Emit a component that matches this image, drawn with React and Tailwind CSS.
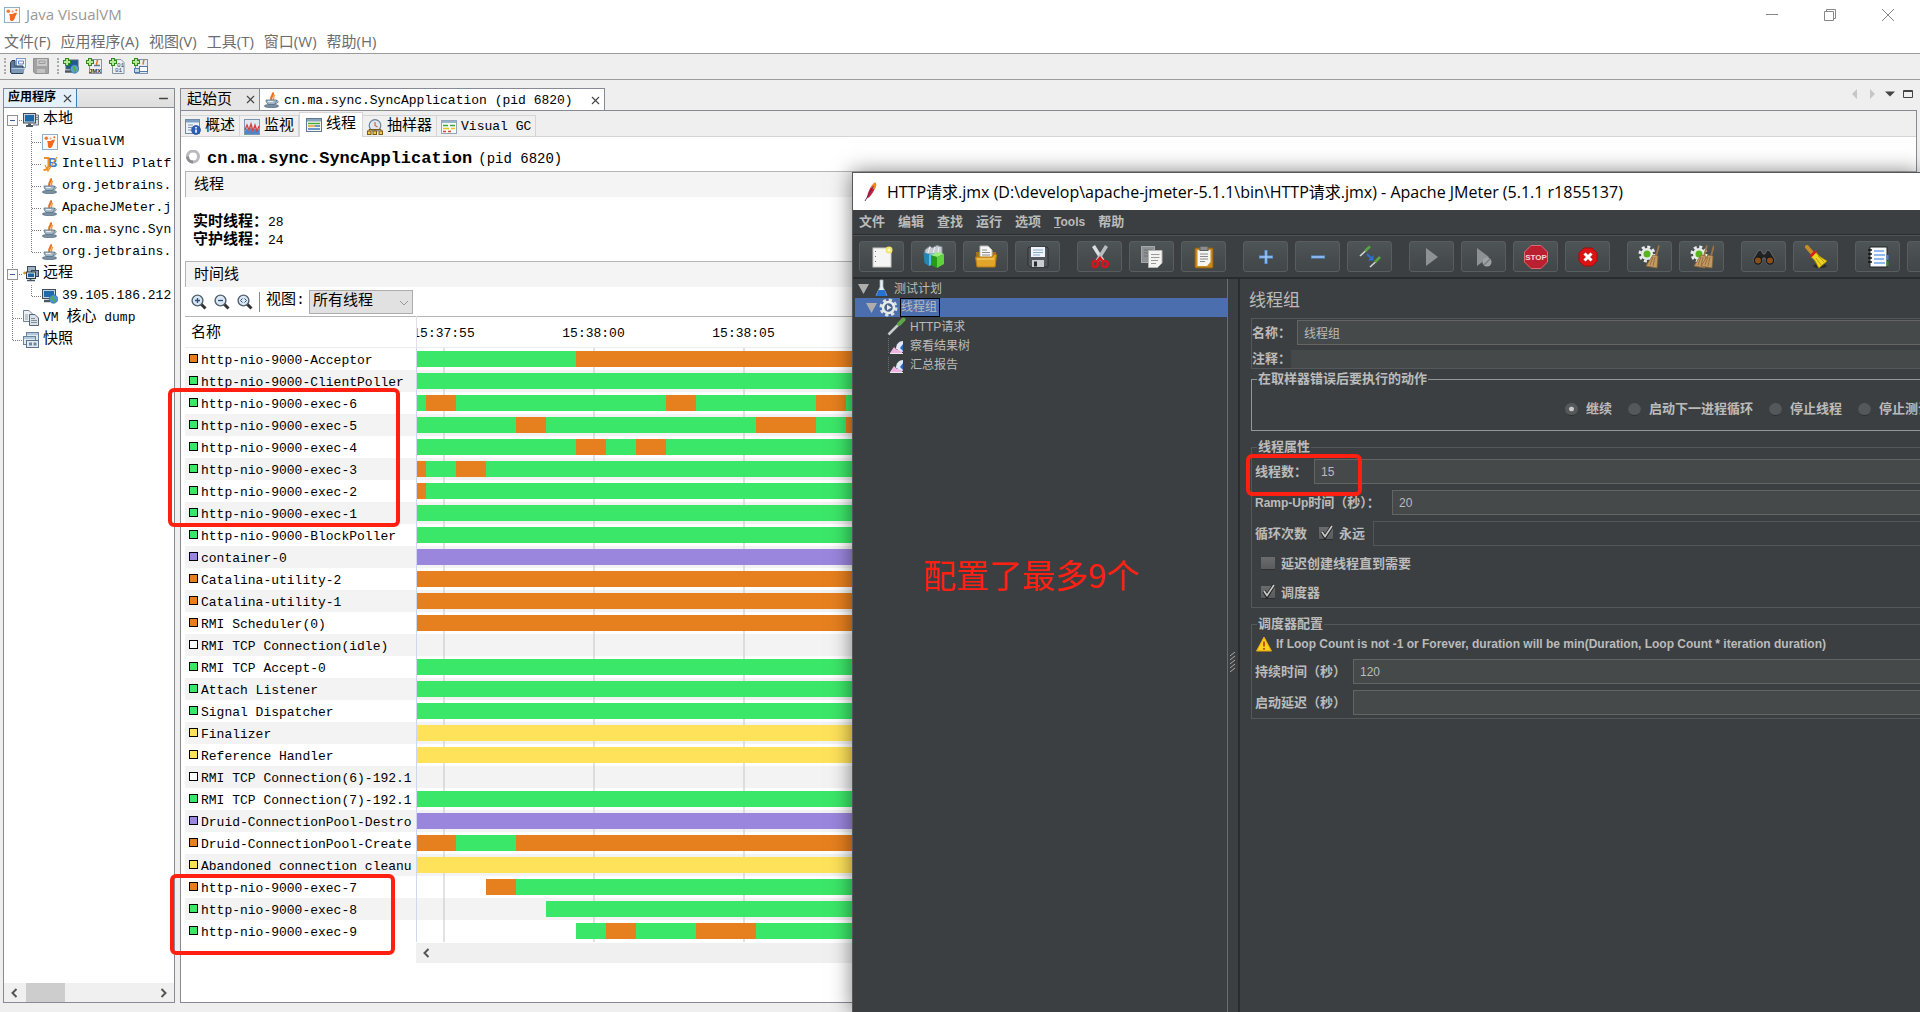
import { Minus, X } from 'lucide-react';

const G = '#3be768';
const O = '#e6801e';
const P = '#9a86dd';
const Y = '#fee25a';

// [colour, start] pairs, the last one runs to the right edge
const threads = [
  { name: 'http-nio-9000-Acceptor', state: O, runs: [[G, 0], [O, 159]] },
  { name: 'http-nio-9000-ClientPoller', state: G, runs: [[G, 0]] },
  { name: 'http-nio-9000-exec-6', state: G, runs: [[G, 0], [O, 9], [G, 39], [O, 249], [G, 279], [O, 399], [G, 429]] },
  { name: 'http-nio-9000-exec-5', state: G, runs: [[G, 0], [O, 99], [G, 129], [O, 339], [G, 399], [O, 429]] },
  { name: 'http-nio-9000-exec-4', state: G, runs: [[G, 0], [O, 159], [G, 189], [O, 219], [G, 249]] },
  { name: 'http-nio-9000-exec-3', state: G, runs: [[O, 0], [G, 9], [O, 39], [G, 69]] },
  { name: 'http-nio-9000-exec-2', state: G, runs: [[O, 0], [G, 9]] },
  { name: 'http-nio-9000-exec-1', state: G, runs: [[G, 0]] },
  { name: 'http-nio-9000-BlockPoller', state: G, runs: [[G, 0]] },
  { name: 'container-0', state: P, runs: [[P, 0]] },
  { name: 'Catalina-utility-2', state: O, runs: [[O, 0]] },
  { name: 'Catalina-utility-1', state: O, runs: [[O, 0]] },
  { name: 'RMI Scheduler(0)', state: O, runs: [[O, 0]] },
  { name: 'RMI TCP Connection(idle)', state: '#ffffff', runs: [] },
  { name: 'RMI TCP Accept-0', state: G, runs: [[G, 0]] },
  { name: 'Attach Listener', state: G, runs: [[G, 0]] },
  { name: 'Signal Dispatcher', state: G, runs: [[G, 0]] },
  { name: 'Finalizer', state: Y, runs: [[Y, 0]] },
  { name: 'Reference Handler', state: Y, runs: [[Y, 0]] },
  { name: 'RMI TCP Connection(6)-192.1', state: '#ffffff', runs: [] },
  { name: 'RMI TCP Connection(7)-192.1', state: G, runs: [[G, 0]] },
  { name: 'Druid-ConnectionPool-Destro', state: P, runs: [[P, 0]] },
  { name: 'Druid-ConnectionPool-Create', state: O, runs: [[O, 0], [G, 39], [O, 99]] },
  { name: 'Abandoned connection cleanu', state: Y, runs: [[Y, 0]] },
  { name: 'http-nio-9000-exec-7', state: O, runs: [['transparent', 0], [O, 69], [G, 99]] },
  { name: 'http-nio-9000-exec-8', state: G, runs: [['transparent', 0], [G, 129]] },
  { name: 'http-nio-9000-exec-9', state: G, runs: [['transparent', 0], [G, 159], [O, 189], [G, 219], [O, 279], [G, 339]] },
];

function Svg({ size = 16, box = 16, children }) {
  return (
    <svg width={size} height={size} viewBox={`0 0 ${box} ${box}`} fill="none" className="shrink-0" aria-hidden="true">
      {children}
    </svg>
  );
}

/* VisualVM icons */

const VisualVmIcon = () => (
  <Svg>
    <rect x="0.5" y="0.5" width="15" height="15" fill="#fbfbfb" stroke="#8fb0c8" />
    <path d="M5 7.5 C7 6 8.5 8 10 6 L13 5.5 L12 8.5 C10.5 9.5 11.5 11 10 12.5 C9 14.5 6.5 14.5 6 12.5 C5.5 11 6.5 9 5 7.5 Z" fill="#f26a1b" />
    <circle cx="4.3" cy="4.3" r="1.8" fill="#f47a30" />
    <circle cx="8.6" cy="4.6" r="1" fill="#f79a60" />
    <circle cx="12.3" cy="3.2" r="1" fill="#f26a1b" />
  </Svg>
);

const JavaIcon = () => (
  <Svg>
    <path d="M8.5 0.5 C10.5 3 6 4 7.5 8" stroke="#e8731c" strokeWidth="2.2" />
    <path d="M11 3 C8.5 5 10.5 6 9.2 8" stroke="#f09a4a" strokeWidth="1.4" />
    <path d="M2 8 H12.5 C12.5 11.5 10.5 13 7.5 13 C4 13 2 11 2 8 Z" fill="#a9bccb" stroke="#566f84" strokeWidth="0.8" />
    <path d="M12 8.8 C15 8.2 15 11.2 11.3 11.4" stroke="#566f84" />
    <ellipse cx="7.5" cy="14" rx="7.2" ry="1.7" fill="#7990a4" stroke="#4a6277" strokeWidth="0.6" />
    <path d="M4 9.5 H9" stroke="#e7eef4" />
  </Svg>
);

const IdeIcon = () => (
  <Svg>
    <text x="6" y="11" fontSize="13" fontWeight="bold" fontFamily="Liberation Sans" fill="#3c76d2">B</text>
    <path d="M2 2 H6.5 V9 C6.5 12 5 14 1.5 14" stroke="#f09020" strokeWidth="2" />
    <path d="M3 9 L6 15 L15 1" stroke="#f09020" strokeWidth="1.2" />
  </Svg>
);

const LocalIcon = () => (
  <Svg>
    <path d="M12.5 3 H15.5 V13 H10" fill="#d7dade" stroke="#6e7780" />
    <rect x="0.5" y="1.5" width="12" height="9.5" fill="#c9d0d6" stroke="#3f4d59" />
    <rect x="2" y="3" width="9" height="6.5" fill="#1d68a8" />
    <path d="M3 14 H10 M5 12.5 H8" stroke="#4c5862" strokeWidth="2" />
    <path d="M13 5.5 H15 M13 7.5 H15" stroke="#7c868f" />
  </Svg>
);

const RemoteIcon = () => (
  <Svg>
    <rect x="4.5" y="0.5" width="8" height="6" fill="#9fb0be" stroke="#3a4a59" />
    <rect x="8.5" y="4.5" width="7" height="6" fill="#8ba2b5" stroke="#3a4a59" />
    <rect x="3.5" y="6" width="9" height="6.5" fill="#dbe0e4" stroke="#2f3c48" />
    <rect x="5" y="7.5" width="6" height="3.5" fill="#1e5f9e" />
    <path d="M4 14.5 H12 M7.5 13 V14" stroke="#485663" strokeWidth="1.6" />
    <path d="M2 7 H4" stroke="#555" />
    <circle cx="1.6" cy="7" r="1.4" fill="#d89528" />
  </Svg>
);

const HostIcon = () => (
  <Svg>
    <rect x="0.5" y="1.5" width="13" height="9" fill="#c9d0d6" stroke="#3f4d59" />
    <rect x="2" y="3" width="10" height="6" fill="#1c6aa9" />
    <path d="M2 13 H8" stroke="#4c5862" strokeWidth="2.5" />
    <circle cx="11.5" cy="11" r="4.3" fill="#4b92d8" stroke="#2b5f94" strokeWidth="0.6" />
    <path d="M9 8.5 L12 8 L12 11 L14 12 L12.5 14.5 L11 12.5 L8.5 11.5 Z" fill="#4fae48" />
  </Svg>
);

const DumpIcon = () => (
  <Svg>
    <path d="M0.5 0.5 H6 L9.5 4 V11.5 H0.5 Z" fill="#edf0f2" stroke="#738391" />
    <path d="M2 5 H5 M2 7 H5 M2 9 H5" stroke="#91a0ad" />
    <path d="M6.5 4.5 H12 L15.5 8 V15.5 H6.5 Z" fill="#dbe1e6" stroke="#54677a" />
    <path d="M8 8.5 H12 M8 10.5 H14 M8 12.5 H14" stroke="#7f8f9d" />
  </Svg>
);

const SnapshotIcon = () => (
  <Svg>
    <rect x="3.5" y="0.5" width="12" height="8" fill="#e3eaf0" stroke="#6b839a" />
    <rect x="0.5" y="4.5" width="12" height="8" fill="#e3eaf0" stroke="#6b839a" />
    <path d="M1 6 H12 M4 2 H15" stroke="#7fa5cf" />
    <rect x="3.5" y="8.5" width="12" height="7" fill="#e3eaf0" stroke="#5a728a" />
    <rect x="6" y="10.5" width="3" height="3" fill="#6d87a3" />
    <rect x="10.5" y="10.5" width="3" height="3" fill="#6d87a3" />
  </Svg>
);

const OpenIcon = () => (
  <Svg>
    <rect x="6.5" y="0.5" width="9" height="9" fill="#f2f6fb" stroke="#7b9bd0" />
    <path d="M8.5 3 H13.5 V6 H8.5 Z" stroke="#5f86c6" />
    <path d="M0.5 4.5 L2 2.5 H5 V8 H13 V15.5 H1.5 L0.5 14 Z" fill="#5c7898" stroke="#2c4058" />
    <path d="M1 10.5 H15 L13 15 H2 Z" fill="#7f9ab8" />
    <path d="M1.5 10.5 H14" stroke="#b4c6da" />
  </Svg>
);

const SaveDisabledIcon = () => (
  <Svg>
    <path d="M0.5 0.5 H15.5 V15.5 H2 L0.5 14 Z" fill="#a2a2a2" stroke="#929292" />
    <rect x="4" y="1" width="10" height="7" fill="#cbcbcb" />
    <path d="M6 3 H12 V5.500 H6 Z" stroke="#9b9b9b" />
    <rect x="4" y="11" width="8" height="4" fill="#c2c2c2" />
  </Svg>
);

const PlusMark = () => (
  <>
    <path d="M4 0 V8 M0 4 H8" stroke="#2f8a1b" strokeWidth="4" />
    <path d="M4 1 V7 M1 4 H7" stroke="#b4e89a" strokeWidth="2" />
  </>
);

const AddHostIcon = () => (
  <Svg>
    <rect x="3" y="2" width="12" height="9" fill="#1c5c92" stroke="#55636f" />
    <path d="M2 13.5 H9" stroke="#4c5862" strokeWidth="2.5" />
    <circle cx="11.5" cy="11" r="4.2" fill="#5c9ede" stroke="#2b5f94" strokeWidth="0.6" />
    <path d="M9 9 L12 8 L12 11 L14 12 L12 14.5 Z" fill="#4fae48" />
    <PlusMark />
  </Svg>
);

const AddJmxIcon = () => (
  <Svg>
    <rect x="3.5" y="1.5" width="12" height="14" fill="#eceff1" stroke="#8494a1" />
    <path d="M11 1.5 C13 4 9 4.5 11 7" stroke="#e8731c" strokeWidth="1.5" />
    <path d="M8 7.5 H14" stroke="#65798a" strokeWidth="1.5" />
    <text x="3" y="15" fontSize="6" fontWeight="bold" fontFamily="Liberation Sans" fill="#333">JMX</text>
    <PlusMark />
  </Svg>
);

const AddDumpIcon = () => (
  <Svg>
    <path d="M3.500 1.500 H12 L15 4.500 V15.500 H3.500 Z" fill="#eceff1" stroke="#8494a1" />
    <text x="8" y="8.5" fontSize="6" fontFamily="Liberation Mono" fill="#34495c">01</text>
    <text x="6" y="14" fontSize="6" fontFamily="Liberation Mono" fill="#34495c">01</text>
    <PlusMark />
  </Svg>
);

const AddSnapshotIcon = () => (
  <Svg>
    <rect x="3.5" y="1.5" width="12" height="14" fill="#e6ecf2" stroke="#7d94aa" />
    <path d="M11.5 1.5 C13 3.5 10 4 11.5 6.5" stroke="#e8731c" strokeWidth="1.5" />
    <rect x="7.5" y="8.5" width="8" height="5" fill="#fff" stroke="#4e79ad" />
    <rect x="2.5" y="10.5" width="5" height="4" fill="#c4d4e6" stroke="#4e79ad" />
    <PlusMark />
  </Svg>
);

const OverviewIcon = () => (
  <Svg>
    <rect x="0.5" y="0.5" width="14" height="14" fill="#eef2f6" stroke="#6f8ba5" />
    <rect x="1" y="1" width="13" height="2.5" fill="#7fa0c2" />
    <path d="M3 6 H8 M3 8.5 H7 M3 11 H6" stroke="#8195a8" />
    <circle cx="11" cy="11" r="4.5" fill="#2c5fb8" stroke="#1d3f86" strokeWidth="0.6" />
    <path d="M11 8 V9.4 M11 10.4 V13.8" stroke="#fff" strokeWidth="1.6" />
  </Svg>
);

const MonitorIcon = () => (
  <Svg>
    <rect x="0.5" y="0.5" width="15" height="15" fill="#dfe9f3" stroke="#7b95ad" />
    <path d="M1 12 L3 9 L5 12 L7 8 L9 13 L11 9 L13 12 L15 10 V15 H1 Z" fill="#4d86c9" />
    <path d="M1 11 L3 6 L5 11 L7 5 L9 12 L11 6 L13 12 L15 7" stroke="#d6413b" strokeWidth="1.3" />
  </Svg>
);

const ThreadsIcon = () => (
  <Svg>
    <rect x="0.5" y="1.5" width="15" height="13" fill="#f3f6e8" stroke="#607a92" />
    <rect x="1" y="2" width="14" height="2.5" fill="#8aa4bd" />
    <path d="M2 6.5 H14" stroke="#45a83a" strokeWidth="1.4" />
    <path d="M2 9 H9" stroke="#d99a1c" strokeWidth="1.4" />
    <path d="M9 9 H14 M2 12 H14" stroke="#3f7ac0" strokeWidth="1.4" />
  </Svg>
);

const SamplerIcon = () => (
  <Svg>
    <circle cx="8" cy="6.5" r="5.8" fill="#dfe8f1" stroke="#6b8094" strokeWidth="1.2" />
    <path d="M8 3 V6.5 L10.5 8" stroke="#d9652a" strokeWidth="1.2" />
    <path d="M2 12 V10.5 H14 V12 M8 10 V12" stroke="#7a5b14" />
    <rect x="0.5" y="12" width="3.5" height="3.5" fill="#f3c648" stroke="#7a5b14" />
    <rect x="6" y="12" width="3.5" height="3.5" fill="#f3c648" stroke="#7a5b14" />
    <rect x="12" y="12" width="3.5" height="3.5" fill="#f3c648" stroke="#7a5b14" />
  </Svg>
);

const GcIcon = () => (
  <Svg>
    <rect x="0.5" y="1.5" width="15" height="13" fill="#fbfcfd" stroke="#8fa5ba" />
    <rect x="1" y="2" width="14" height="2" fill="#9db3c8" />
    <path d="M2 6.5 H7 M9 6.5 H14" stroke="#3da935" strokeWidth="1.6" />
    <path d="M2 9.5 H8 M10 9.5 H14" stroke="#e8c022" strokeWidth="1.4" />
    <path d="M2 12.5 H5 M7 12.5 H10" stroke="#d84436" strokeWidth="1.4" />
  </Svg>
);

const Magnifier = ({ children }) => (
  <Svg>
    <path d="M10 10 L14.5 14.5" stroke="#333" strokeWidth="3" />
    <circle cx="6.5" cy="6.5" r="5.4" fill="#dbe8f4" stroke="#51606e" strokeWidth="1.4" />
    {children}
  </Svg>
);

/* JMeter icons, 24 unit box */

const NewIcon = () => (
  <Svg size={24} box={24}>
    <rect x="3" y="3" width="18" height="19" fill="#f5f5f3" stroke="#c5c5c0" />
    <path d="M5.5 6 V19" stroke="#777" strokeDasharray="1 4" />
    <circle cx="19" cy="5" r="3.5" fill="#f3e36a" />
    <circle cx="19" cy="5" r="1.6" fill="#fffbd0" />
  </Svg>
);

const TemplatesIcon = () => (
  <Svg size={24} box={24}>
    <path d="M3 5 L8 1 L10 3 L15 0.5 L20 2 V9 H3 Z" fill="#c5cbd0" stroke="#87929a" />
    <path d="M8 2 L6 8 M13 2 L11 8 M17 2 L16 8" stroke="#f0f2f3" />
    <path d="M1.5 7 L7 9.5 V21 L2.5 18 Z" fill="#2585b5" />
    <path d="M7 9.5 L12 8 V19 L7 21 Z" fill="#56c0e6" />
    <path d="M9 10 L15 12 V23 L9 20 Z" fill="#279a1c" />
    <path d="M15 12 L22 9 V19 L15 23 Z" fill="#5fd33c" />
    <path d="M9 10 L16 7 L22 9 L15 12 Z" fill="#9cec7c" />
  </Svg>
);

const FolderIcon = () => (
  <Svg size={24} box={24}>
    <path d="M2 7 H22 V21 H3 Z" fill="#a87412" />
    <path d="M6 1 H14 L18 5 V14 H6 Z" fill="#f7f7f7" stroke="#b9b9b9" />
    <path d="M8 5 H13 M8 7.5 H16 M8 10 H16" stroke="#8c8c8c" />
    <path d="M1.5 12 H18 L20 9.5 H22.5 L21 22 H3 Z" fill="#e0a52a" stroke="#b27b12" />
    <path d="M3 14 H20" stroke="#f8d576" />
  </Svg>
);

const FloppyIcon = () => (
  <Svg size={24} box={24}>
    <path d="M3 2 H21 L22 3 V22 H4 L2 20 V3 Z" fill="#52565b" stroke="#2c2f32" />
    <rect x="5" y="2" width="14" height="10" fill="#eef4fa" />
    <path d="M7 5 H17 M7 7.5 H17 M7 10 H14" stroke="#8ba9c9" />
    <rect x="6" y="15" width="12" height="7" fill="#c9ccd0" />
    <rect x="8" y="16.5" width="3" height="5" fill="#2a2c2e" />
  </Svg>
);

const CutIcon = () => (
  <Svg size={24} box={24}>
    <path d="M5.5 1 L15 16" stroke="#dcdfe1" strokeWidth="3.5" />
    <path d="M18.5 1 L9 16" stroke="#b9bdc0" strokeWidth="3.5" />
    <ellipse cx="7" cy="19" rx="2.8" ry="3" stroke="#d5151b" strokeWidth="2.6" />
    <ellipse cx="17" cy="19" rx="2.8" ry="3" stroke="#d5151b" strokeWidth="2.6" />
    <path d="M9 16.5 L12 13 L15 16.5" stroke="#d5151b" strokeWidth="2.6" />
  </Svg>
);

const CopyIcon = () => (
  <Svg size={24} box={24}>
    <rect x="1.5" y="1.5" width="13" height="16" fill="#8e9193" stroke="#a5a8aa" />
    <path d="M4 5 H12 M4 8 H12 M4 11 H8" stroke="#6c6f71" />
    <path d="M8.5 5.5 H22 V18 L17.5 22.5 H8.5 Z" fill="#f3f3f1" stroke="#b6b6b2" />
    <path d="M11 9.5 H19.5 M11 12.5 H19.5 M11 15.5 H18 M11 18.5 H16" stroke="#999" />
  </Svg>
);

const PasteIcon = () => (
  <Svg size={24} box={24}>
    <rect x="3" y="3" width="18" height="20" rx="1" fill="#c98a23" stroke="#8c5b0e" />
    <path d="M5.5 5 H18.5 V17 L15 21 H5.5 Z" fill="#f5f5f2" />
    <rect x="8" y="1.5" width="8" height="4" fill="#8b8e91" stroke="#5d6063" />
    <path d="M8 9 H16 M8 11.5 H16 M8 14 H16 M8 16.5 H13" stroke="#8a8a8a" />
  </Svg>
);

const PlusIcon = () => (
  <Svg size={24} box={24}>
    <path d="M12 5 V19 M5 12 H19" stroke="#5b97de" strokeWidth="3" />
    <path d="M12 6 V18 M6 12 H18" stroke="#b7d5f5" />
  </Svg>
);

const MinusIcon = () => (
  <Svg size={24} box={24}>
    <path d="M5 12 H19" stroke="#5b97de" strokeWidth="3" />
    <path d="M6 12 H18" stroke="#b7d5f5" />
  </Svg>
);

const ToggleIcon = () => (
  <Svg size={24} box={24}>
    <path d="M2 11 L8 5.5" stroke="#d3d6d8" strokeWidth="1.6" />
    <path d="M7 6 L12 1.5" stroke="#58a445" strokeWidth="2.6" />
    <path d="M12 22 L18 16.5" stroke="#d3d6d8" strokeWidth="1.6" />
    <path d="M17 17 L22 12" stroke="#58a445" strokeWidth="2.6" />
    <path d="M9 9 L13 13" stroke="#2e71d0" strokeWidth="1.8" />
    <path d="M15.5 10 V15.5 H10 Z" fill="#2e71d0" />
  </Svg>
);

const PlayIcon = () => (
  <Svg size={24} box={24}><path d="M6 3 L18 12 L6 21 Z" fill="#8f9294" /></Svg>
);

const PlayNoTimersIcon = () => (
  <Svg size={24} box={24}>
    <path d="M5 3 L17 12 L5 21 Z" fill="#8f9294" />
    <circle cx="15" cy="17" r="4.5" fill="#9fa2a4" />
    <path d="M12 20 L18 14" stroke="#787b7d" strokeWidth="1.5" />
  </Svg>
);

const StopIcon = () => (
  <Svg size={24} box={24}>
    <path d="M7 0.5 H17 L23.5 7 V17 L17 23.5 H7 L0.5 17 V7 Z" fill="#bb2030" stroke="#dc6974" />
    <text x="12" y="15" textAnchor="middle" fontSize="8" fontWeight="bold" fontFamily="Liberation Sans" fill="#f4d5d8">STOP</text>
  </Svg>
);

const ShutdownIcon = () => (
  <Svg size={24} box={24}>
    <path d="M8 3 H16 L21 8 V16 L16 21 H8 L3 16 V8 Z" fill="#da1414" stroke="#a90808" />
    <path d="M8.5 8.5 L15.5 15.5 M15.5 8.5 L8.5 15.5" stroke="#fff" strokeWidth="3" />
  </Svg>
);

const Broom = ({ x }) => (
  <g transform={`translate(${x} 0)`}>
    <path d="M20 0.5 L17 11" stroke="#9a7443" strokeWidth="1.8" />
    <path d="M14 10 L19 11 L18 23 L7 21 Z" fill="#c29a63" stroke="#8b6636" strokeWidth="0.8" />
    <path d="M14 12 L11 20 M16 12 L14 21" stroke="#8b6636" strokeWidth="0.8" />
  </g>
);

const ClearIcon = ({ double }) => (
  <Svg size={24} box={24}>
    <circle cx="9" cy="9" r="6" fill="#e8ebea" />
    <circle cx="9" cy="9" r="7" stroke="#e8ebea" strokeWidth="3" strokeDasharray="3 2.5" />
    <circle cx="9" cy="9" r="3.5" fill="#58b41f" />
    {double && <Broom x={-3} />}
    <Broom x={double ? 4 : 1} />
  </Svg>
);

const BinocularsIcon = () => (
  <Svg size={24} box={24}>
    <path d="M6 6 L9 5 L11 9 H13 L15 5 L18 6 L23 15 L20 19 H15 L13 13 H11 L9 19 H4 L1 15 Z" fill="#202224" stroke="#636669" />
    <circle cx="6" cy="15.5" r="3.6" fill="#8a4f1d" stroke="#17191a" strokeWidth="1.2" />
    <circle cx="18" cy="15.5" r="3.6" fill="#8a4f1d" stroke="#17191a" strokeWidth="1.2" />
  </Svg>
);

const SweepIcon = () => (
  <Svg size={24} box={24}>
    <ellipse cx="16" cy="21" rx="7" ry="2" fill="#2b2d2e" />
    <path d="M3 2 L9 9" stroke="#c88b25" strokeWidth="4" strokeLinecap="round" />
    <path d="M7 12 L12 7 C14 11 18 13 23 16 L15 23 C13 21 12 15 7 12 Z" fill="#eed51f" stroke="#a98d0b" />
    <path d="M6.5 11.5 L12 6" stroke="#d3201c" strokeWidth="2.6" />
    <path d="M12 13 L17 20 M14 11 L20 17" stroke="#b89c10" />
  </Svg>
);

const FunctionIcon = () => (
  <Svg size={24} box={24}>
    <rect x="4" y="2" width="17" height="20" fill="#f7f9fc" stroke="#222" />
    <path d="M2 5 H6 M2 9 H6 M2 13 H6 M2 17 H6" stroke="#111" strokeWidth="1.5" />
    <path d="M8 6 H18 M8 10 H19 M8 14 H18 M8 18 H19" stroke="#2e7be0" strokeWidth="1.2" />
    <path d="M21.5 10 V15" stroke="#3c86e0" strokeWidth="2" />
    <path d="M21.5 16 V21" stroke="#2c8c2a" strokeWidth="2" />
  </Svg>
);

const FeatherIcon = () => (
  <Svg size={20} box={20}>
    <path d="M14 0.5 C16.500 2 13.500 9 8.500 15 L6 16.500 C6.500 10 10 3 14 0.5 Z" fill="#c92337" />
    <path d="M14 0.5 C16.500 2 15 5 13.500 7.500 L10 5.500 C11 3 12.500 1.500 14 0.5 Z" fill="#ee8a21" />
    <path d="M12.5 4 L4 19" stroke="#5e1d5c" strokeWidth="0.9" />
  </Svg>
);

const FlaskIcon = () => (
  <Svg size={19} box={19}>
    <path d="M8 1 H11 V8 L15 16.5 H4 L8 8 Z" fill="#e6eef5" stroke="#aab7c2" strokeWidth="0.7" />
    <path d="M6.5 11 H12.5 L15 17 H4 Z" fill="#2672d2" />
  </Svg>
);

const GearIcon = () => (
  <Svg size={19} box={19}>
    <circle cx="9.5" cy="9.5" r="7" stroke="#dcdfdf" strokeWidth="4" strokeDasharray="3 2.5" />
    <circle cx="9.5" cy="9.5" r="5.5" fill="#49648f" stroke="#e9ebeb" strokeWidth="2.5" />
    <path d="M8 6.8 L12.5 9.5 L8 12.2 Z" fill="#e9ebeb" />
  </Svg>
);

const DropperIcon = () => (
  <Svg size={19} box={19}>
    <path d="M1.5 17.5 L11 8" stroke="#c9cccd" strokeWidth="2.5" />
    <path d="M10 6 L13 9" stroke="#333" strokeWidth="1.5" />
    <path d="M12 7 L16.5 2.5" stroke="#5ca648" strokeWidth="4" strokeLinecap="round" />
  </Svg>
);

const ReportIcon = () => (
  <Svg size={19} box={19}>
    <path d="M1.5 2 V17.5" stroke="#6c6f71" strokeDasharray="1 1" />
    <path d="M3 17 L7 11 L10 14 L15 12 V17 Z" fill="#f0b4e4" />
    <path d="M9 13 C9 8 12 5 16 5 V16 Z" fill="#dfe9fb" />
    <path d="M13 12 L16 8 V15 Z" fill="#2b68c4" />
    <path d="M3 17.5 H16" stroke="#e9e9e9" />
  </Svg>
);

const WarnIcon = () => (
  <Svg>
    <path d="M8 1 L15.5 15 H0.5 Z" fill="#fcd21c" stroke="#e5a50e" strokeLinejoin="round" />
    <path d="M8 5.5 V10.5 M8 12 V13.8" stroke="#c2421a" strokeWidth="1.8" />
  </Svg>
);

/* application tree */

function Branch({ kind, last }) {
  const box = kind === 'open' || kind === 'root';
  const top = kind === 'root' ? 12 : 0;
  return (
    <svg width="19" height="22" className="shrink-0" aria-hidden="true" fill="none">
      <path d={`M8.5 ${top} V${last ? 11 : 22}`} stroke="#808080" strokeDasharray="1 1" />
      {kind !== 'line' && <path d="M9 11.5 H19" stroke="#808080" strokeDasharray="1 1" />}
      {box && (
        <>
          <rect x="3.5" y="6.5" width="10" height="10" fill="#fafafa" stroke="#919191" />
          <path d="M6 11.5 H11" stroke="#3b5f9e" />
        </>
      )}
    </svg>
  );
}

const apps = [
  ['VisualVM', VisualVmIcon],
  ['IntelliJ Platf', IdeIcon],
  ['org.jetbrains.', JavaIcon],
  ['ApacheJMeter.j', JavaIcon],
  ['cn.ma.sync.Syn', JavaIcon],
  ['org.jetbrains.', JavaIcon],
];

function TreeRow({ children }) {
  return <li className="flex h-[22px] items-center gap-1 overflow-hidden whitespace-nowrap">{children}</li>;
}

function AppTree() {
  return (
    <ul className="flex-1 bg-white pt-px">
      <TreeRow>
        <span className="-mr-1 flex"><Branch kind="root" /></span>
        <LocalIcon /><span className="text-[15px]">本地</span>
      </TreeRow>
      {apps.map(([name, Icon], i) => (
        <TreeRow key={i}>
          <span className="-mr-1 flex"><Branch kind="line" /><Branch kind="tee" last={i === apps.length - 1} /></span>
          <Icon /><span>{name}</span>
        </TreeRow>
      ))}
      <TreeRow>
        <span className="-mr-1 flex"><Branch kind="open" /></span>
        <RemoteIcon /><span className="text-[15px]">远程</span>
      </TreeRow>
      <TreeRow>
        <span className="-mr-1 flex"><Branch kind="line" /><Branch kind="tee" last /></span>
        <HostIcon /><span>39.105.186.212</span>
      </TreeRow>
      <TreeRow>
        <span className="-mr-1 flex"><Branch kind="tee" /></span>
        <DumpIcon /><span>VM <span className="text-[15px]">核心</span> dump</span>
      </TreeRow>
      <TreeRow>
        <span className="-mr-1 flex"><Branch kind="tee" last /></span>
        <SnapshotIcon /><span className="text-[15px]">快照</span>
      </TreeRow>
    </ul>
  );
}

function Chevron({ flip }) {
  return (
    <svg width="8" height="10" fill="none" aria-hidden="true">
      <path d={flip ? 'M1.5 1 L5.5 5 L1.5 9' : 'M6.5 1 L2.5 5 L6.5 9'} stroke="#555" strokeWidth="2" />
    </svg>
  );
}

function Sidebar() {
  return (
    <aside className="flex w-[172px] shrink-0 flex-col border border-[#878a94] bg-[#efefef]">
      <div className="flex h-[19px] items-center justify-between border-b border-[#878a94] bg-gradient-to-b from-[#e9e9e9] to-[#dedede]">
        <div className="flex h-full w-[73px] items-center justify-between border-r border-[#3c7fb1] bg-[#e4f0fa] pr-0.5 pl-1">
          <span className="text-[12px] font-bold">应用程序</span>
          <button aria-label="Close" className="text-[#444]"><X size={13} /></button>
        </div>
        <button aria-label="Minimize" className="mr-1 text-[#444]"><Minus size={13} strokeWidth={3} /></button>
      </div>
      <AppTree />
      <div className="flex h-[19px] items-center bg-[#f0f0f0] px-1.5">
        <button aria-label="Left"><Chevron /></button>
        <div className="ml-2 h-full w-[39px] bg-[#cdcdcd]" />
        <button aria-label="Right" className="ml-auto"><Chevron flip /></button>
      </div>
    </aside>
  );
}

/* thread view */

function Timeline({ runs }) {
  return (
    <div className="flex h-4">
      {runs.map(([color, start], i) => {
        const next = runs[i + 1];
        return (
          <div
            key={start}
            className={next ? 'shrink-0' : 'flex-1'}
            style={{ backgroundColor: color, width: next ? next[1] - start : undefined }}
          />
        );
      })}
    </div>
  );
}

function ThreadTable() {
  return (
    <table className="w-full table-fixed border-collapse border-t border-[#b5b5b5]">
      <thead>
        <tr className="h-[31px] border-b border-[#ededed] text-left">
          <th className="w-[231px] border-r border-[#e0e0e8] p-0 pt-1 pl-1.5 text-[15px] leading-5 font-normal">名称</th>
          <th className="p-0 pt-1 font-normal">
            <div className="flex overflow-hidden">
              <div className="-ml-[48px] flex">
                <span className="w-[150px] text-center">15:37:55</span>
                <span className="w-[150px] text-center">15:38:00</span>
                <span className="w-[150px] text-center">15:38:05</span>
              </div>
            </div>
          </th>
        </tr>
      </thead>
      <tbody>
        {threads.map((t) => (
          <tr key={t.name} className="h-[22px] even:bg-[#f3f3f3]">
            <td className="border-r border-[#cfd6f0] p-0">
              <div className="flex h-[22px] items-center gap-[3px] overflow-hidden pl-1 whitespace-nowrap">
                <span className="mb-0.5 h-[9px] w-[9px] shrink-0 border border-black" style={{ backgroundColor: t.state }} />
                <span className="pt-[3px] leading-[19px]">{t.name}</span>
              </div>
            </td>
            <td className="bg-[linear-gradient(to_right,#c4c4c4_1px,transparent_1px)] bg-[length:150px_100%] bg-[position:27px_0] p-0">
              <Timeline runs={t.runs} />
            </td>
          </tr>
        ))}
      </tbody>
    </table>
  );
}

const views = [
  ['概述', OverviewIcon],
  ['监视', MonitorIcon],
  ['线程', ThreadsIcon],
  ['抽样器', SamplerIcon],
  ['Visual GC', GcIcon],
];

function SectionTitle({ children }) {
  return (
    <h2 className="h-[26px] border-t border-l border-[#b5b5b5] bg-[#f4f4f4] pt-0.5 pl-2 text-[15px] leading-6">{children}</h2>
  );
}

function Editor() {
  return (
    <main className="ml-[5px] flex min-w-0 flex-1 flex-col">
      <div className="flex h-[22px] items-stretch">
        <div className="flex w-20 items-center justify-between border border-b-0 border-[#878a94] bg-[#e6e6e6] pr-0.5 pl-1.5">
          <span className="pt-0.5 text-[15px] leading-5">起始页</span>
          <button aria-label="Close" className="text-[#444]"><X size={13} /></button>
        </div>
        <div className="-mb-px flex w-[345px] items-center gap-1 border border-b-0 border-l-0 border-[#878a94] bg-white pr-0.5 pl-1">
          <JavaIcon />
          <span className="pt-0.5">cn.ma.sync.SyncApplication (pid 6820)</span>
          <button aria-label="Close" className="ml-auto text-[#444]"><X size={13} /></button>
        </div>
        <div className="ml-auto pt-px pr-0.5">
          <svg width="64" height="12" fill="none" aria-hidden="true">
            <path d="M6 0 V10 L1 5 Z M19 0 V10 L24 5 Z" fill="#c6c6c6" />
            <path d="M34 2.5 H44 L39 7.5 Z" fill="#444" />
            <path d="M52.5 1.5 H61.5 V8.5 H52.5 Z M52 2.5 H62" stroke="#444" />
          </svg>
        </div>
      </div>
      <div className="flex flex-1 flex-col border border-[#878a94] bg-white">
        <div className="flex h-[26px] items-end border-b border-[#d5d5d5] bg-[#efefef]">
          {views.map(([label, Icon]) => (
            <button
              key={label}
              className={
                label === '线程'
                  ? '-mb-px flex h-[25px] items-center gap-1 border border-b-0 border-[#d5d5d5] bg-white px-[6px]'
                  : 'flex h-[21px] items-center gap-1 border-t border-r border-[#d5d5d5] bg-[#f0f0f0] px-1 pt-0.5'
              }
            >
              <Icon />
              <span className={label === 'Visual GC' ? '' : 'text-[15px]'}>{label}</span>
            </button>
          ))}
        </div>
        <div className="flex h-[34px] items-center gap-1.5 pt-2 pl-1">
          <Svg>
            <circle cx="8" cy="6.5" r="5.5" stroke="#b9b9bf" strokeWidth="3" />
            <path d="M2.5 6.5 A5.5 5.5 0 0 0 8 12" stroke="#8d8d95" strokeWidth="3" />
          </Svg>
          <h1 className="pt-0.5 text-[17px] font-bold">cn.ma.sync.SyncApplication</h1>
          <span className="pt-0.5 text-[14px]">(pid 6820)</span>
        </div>
        <div className="flex-1 pl-1">
          <SectionTitle>线程</SectionTitle>
          <div className="h-16 pt-[17px] pl-2 leading-[18px]">
            <p><b className="text-[15px]">实时线程：</b>28</p>
            <p><b className="text-[15px]">守护线程：</b>24</p>
          </div>
          <SectionTitle>时间线</SectionTitle>
          <div className="flex h-[29px] items-center pl-1.5 text-[15px]">
            <button aria-label="Zoom in"><Magnifier><path d="M6.5 4 V9 M4 6.5 H9" stroke="#2a4f78" strokeWidth="1.3" /></Magnifier></button>
            <button aria-label="Zoom out" className="ml-[7px]"><Magnifier><path d="M4 6.5 H9" stroke="#2a4f78" strokeWidth="1.3" /></Magnifier></button>
            <button aria-label="Scale to fit" className="ml-[7px]"><Magnifier><path d="M5.5 4.5 L3.5 6.5 L5.5 8.5 M7.5 4.5 L9.5 6.5 L7.5 8.5" stroke="#2a4f78" /></Magnifier></button>
            <span className="mx-1.5 h-5 w-px bg-[#8a8a8a]" />
            <label htmlFor="view">视图:</label>
            <span className="relative ml-1">
              <select id="view" className="h-6 w-[104px] appearance-none border border-[#adadad] bg-[#e1e1e1] pl-[3px] leading-5">
                <option>所有线程</option>
              </select>
              <svg width="10" height="6" fill="none" className="absolute top-[10px] right-1" aria-hidden="true">
                <path d="M1 1 L5 5 L9 1" stroke="#999" />
              </svg>
            </span>
          </div>
          <ThreadTable />
          <div className="mt-px ml-[231px] flex h-5 items-center bg-[#f0f0f0] pl-1.5">
            <button aria-label="Scroll left"><Chevron /></button>
          </div>
        </div>
      </div>
    </main>
  );
}

/* JMeter window */

const toolGroups = [
  [['New', NewIcon], ['Templates', TemplatesIcon], ['Open', FolderIcon], ['Save', FloppyIcon]],
  [['Cut', CutIcon], ['Copy', CopyIcon], ['Paste', PasteIcon]],
  [['Expand', PlusIcon], ['Collapse', MinusIcon], ['Toggle', ToggleIcon]],
  [['Start', PlayIcon], ['Start no pauses', PlayNoTimersIcon], ['Stop', StopIcon], ['Shutdown', ShutdownIcon]],
  [['Clear', ClearIcon], ['Clear all', () => <ClearIcon double />]],
  [['Search', BinocularsIcon], ['Reset search', SweepIcon]],
  [['Function helper', FunctionIcon], ['Help', () => null]],
];

function Box({ id, value = '', disabled, label }) {
  return (
    <input
      id={id}
      aria-label={label}
      defaultValue={value}
      disabled={disabled}
      className="h-[25px] min-w-0 flex-1 border border-r-0 border-[#646464] bg-[#45494a] px-1.5 text-[12px] disabled:border-[#555] disabled:bg-transparent"
    />
  );
}

function Field({ id, label, value, width }) {
  return (
    <div className="flex h-[25px] items-center">
      <label htmlFor={id} className={`${width} shrink-0 font-bold whitespace-nowrap`}>{label}</label>
      <Box id={id} value={value} />
    </div>
  );
}

function Check({ label, checked }) {
  return (
    <label className="flex items-center gap-1.5 font-bold">
      <span className="relative flex">
        <input type="checkbox" defaultChecked={checked} className="peer h-[13px] w-[14px] appearance-none border-b border-[#2e3031] bg-gradient-to-b from-[#6a6c6d] to-[#595b5c]" />
        <svg width="14" height="15" fill="none" className="absolute bottom-0 left-0 hidden peer-checked:block" aria-hidden="true">
          <path d="M3 7 L6 12 L13 1" stroke="#222" strokeWidth="3.5" />
          <path d="M3 7 L6 11.5 L13 1" stroke="#c8c8c8" strokeWidth="1.8" />
        </svg>
      </span>
      {label}
    </label>
  );
}

function Group({ title, className, children }) {
  return (
    <fieldset className={`min-w-0 overflow-hidden border border-r-0 ${className}`}>
      <legend className="ml-[5px] px-px leading-[18px] font-bold">{title}</legend>
      {children}
    </fieldset>
  );
}

function Triangle() {
  return (
    <svg width="11" height="10" className="shrink-0" aria-hidden="true"><path d="M0 0 H11 L5.5 10 Z" fill="#adadad" /></svg>
  );
}

const radios = ['继续', '启动下一进程循环', '停止线程', '停止测试'];

function JMeter() {
  return (
    <section className="absolute top-[172px] right-0 bottom-0 left-[852px] flex flex-col overflow-hidden border-t border-l border-[#55585a] bg-[#3c3f41] font-['Liberation_Sans','Noto_Sans_CJK_SC',sans-serif] text-[13px] text-[#bbb] shadow-[0_0_20px_rgba(0,0,0,0.5)]">
      <header className="flex h-[37px] shrink-0 items-center gap-1.5 bg-white px-2 font-['Open_Sans','Noto_Sans_CJK_SC',sans-serif] text-[16px] text-black">
        <FeatherIcon />
        <span className="whitespace-nowrap">HTTP请求.jmx (D:\develop\apache-jmeter-5.1.1\bin\HTTP请求.jmx) - Apache JMeter (5.1.1 r1855137)</span>
      </header>
      <nav className="flex h-[25px] shrink-0 items-center gap-[13px] border-b border-[#2a2c2d] pl-1.5 font-bold">
        {['文件', '编辑', '查找', '运行', '选项'].map((m) => <button key={m}>{m}</button>)}
        <button className="text-[12px]"><u>T</u>ools</button>
        <button>帮助</button>
      </nav>
      <div className="flex h-[42px] shrink-0 items-center gap-[17px] border-t border-[#515456] pl-1.5">
        {toolGroups.map((group, i) => (
          <div key={i} className="flex gap-[7px]">
            {group.map(([name, Icon]) => (
              <button key={name} aria-label={name} className="flex h-[31px] w-[45px] shrink-0 items-center justify-center rounded-[3px] border border-[#5a5d5f] bg-gradient-to-b from-[#4e5557] to-[#414648]">
                <Icon />
              </button>
            ))}
          </div>
        ))}
      </div>
      <div className="flex flex-1 border-t-2 border-[#292b2d]">
        <ul className="w-[375px] shrink-0 border-r border-[#6a6c6e] pl-0.5 text-[12px]">
          <li className="flex h-[19px] items-center gap-[3px] pl-[3px]"><Triangle /><FlaskIcon /><span>测试计划</span></li>
          <li className="flex h-[19px] items-center gap-0.5 bg-[#4b6eaf] pl-[11px]">
            <Triangle /><GearIcon /><span className="border border-black pr-0.5 leading-[17px]">线程组</span>
          </li>
          <li className="flex h-[19px] items-center gap-1 pl-8"><DropperIcon /><span>HTTP请求</span></li>
          <li className="flex h-[19px] items-center gap-1 pl-8"><ReportIcon /><span>察看结果树</span></li>
          <li className="flex h-[19px] items-center gap-1 pl-8"><ReportIcon /><span>汇总报告</span></li>
        </ul>
        <div className="flex w-[10px] shrink-0 items-center justify-center pt-8">
          <svg width="6" height="20" fill="none" aria-hidden="true">
            <path d="M0 4 L5 0 M0 8 L5 4 M0 12 L5 8 M0 16 L5 12 M0 20 L5 16" stroke="#aaa" />
          </svg>
        </div>
        <form className="min-w-0 flex-1 border-l-2 border-[#292b2d] pl-[11px]">
          <h2 className="-ml-0.5 h-[39px] text-[17px] leading-[44px]">线程组</h2>
          <div className="flex h-[51px] flex-col gap-[5px] border border-r-0 border-[#55585a] pt-px">
            <Field id="name" label="名称：" value="线程组" width="w-[45px]" />
            <div className="flex h-[18px] items-center">
              <label htmlFor="comment" className="w-[39px] shrink-0 font-bold whitespace-nowrap">注释：</label>
              <input id="comment" className="h-[18px] min-w-0 flex-1 bg-[#45494a]" />
            </div>
          </div>
          <Group title="在取样器错误后要执行的动作" className="mt-px border-[#969696]">
            <div className="flex h-[42px] items-center gap-4 pl-[313px] font-bold whitespace-nowrap">
              {radios.map((r, i) => (
                <label key={r} className="flex shrink-0 items-center gap-2">
                  <input
                    type="radio"
                    name="onerror"
                    defaultChecked={i === 0}
                    className="h-[13px] w-[13px] appearance-none rounded-full border-b border-[#2a2c2d] bg-[#54585a] checked:bg-[radial-gradient(#c8c8c8_2px,#54585a_3px)]"
                  />
                  {r}
                </label>
              ))}
            </div>
          </Group>
          <Group title="线程属性" className="mt-[7px] border-[#55585a]">
            <div className="flex flex-col gap-1.5 pt-[3px] pl-[3px]">
              <Field id="threads" label="线程数：" value="15" width="w-[59px]" />
              <div className="flex h-[25px] items-center">
                <label htmlFor="ramp" className="w-[137px] shrink-0 font-bold whitespace-nowrap"><span className="text-[12px]">Ramp-Up</span>时间（秒）：</label>
                <Box id="ramp" value="20" />
              </div>
              <div className="flex h-[25px] items-center">
                <span className="w-16 font-bold">循环次数</span>
                <span className="mr-2"><Check label="永远" checked /></span>
                <Box label="循环次数" disabled />
              </div>
            </div>
            <div className="pt-[3px] pl-[9px]">
              <div className="flex h-[29px] items-center"><Check label="延迟创建线程直到需要" /></div>
              <div className="flex h-[29px] items-center"><Check label="调度器" checked /></div>
            </div>
          </Group>
          <Group title="调度器配置" className="mt-[7px] border-[#55585a]">
            <p className="flex h-[26px] items-center gap-1 pb-1 pl-1 text-[12px] font-bold whitespace-nowrap">
              <WarnIcon />If Loop Count is not -1 or Forever, duration will be min(Duration, Loop Count * iteration duration)
            </p>
            <div className="flex flex-col gap-1.5 pb-[3px] pl-[3px]">
              <Field id="duration" label="持续时间（秒）" value="120" width="w-[98px]" />
              <Field id="delay" label="启动延迟（秒）" width="w-[98px]" />
            </div>
          </Group>
        </form>
      </div>
    </section>
  );
}

export default function App() {
  return (
    <div className="relative flex h-screen flex-col overflow-hidden bg-[#efefef] font-['Liberation_Mono','Noto_Sans_CJK_SC',monospace] text-[13px] text-black">
      <header className="bg-white font-['Open_Sans','Noto_Sans_CJK_SC',sans-serif]">
        <div className="flex h-[29px] items-center gap-1.5 pl-1 text-[15px] text-[#999]">
          <VisualVmIcon />
          <span>Java VisualVM</span>
          <div className="ml-auto flex items-center gap-[46px] pr-[26px]">
            <button aria-label="Minimize">
              <svg width="12" height="12" aria-hidden="true"><path d="M0 5.5 H12" stroke="#888" /></svg>
            </button>
            <button aria-label="Restore">
              <svg width="12" height="12" fill="none" aria-hidden="true"><path d="M0.5 2.5 H9.5 V11.5 H0.5 Z M2.5 2 V0.5 H11.5 V9.5 H10" stroke="#888" /></svg>
            </button>
            <button aria-label="Close">
              <svg width="12" height="12" aria-hidden="true"><path d="M0 0 L12 12 M12 0 L0 12" stroke="#888" /></svg>
            </button>
          </div>
        </div>
        <nav className="flex h-[25px] items-center gap-2.5 border-b border-[#9b9b9b] pl-1 text-[15px] text-[#6d6d6d]">
          {['文件(F)', '应用程序(A)', '视图(V)', '工具(T)', '窗口(W)', '帮助(H)'].map((m) => <button key={m}>{m}</button>)}
        </nav>
      </header>
      <div className="flex h-[26px] shrink-0 items-center border-b border-[#9b9b9b] pb-0.5 pl-1">
        <span className="mr-1 h-4 border-l-2 border-dotted border-[#aaa]" />
        <button aria-label="Load"><OpenIcon /></button>
        <button aria-label="Save" className="ml-[7px]"><SaveDisabledIcon /></button>
        <span className="mr-1 ml-2 h-4 border-l-2 border-dotted border-[#aaa]" />
        <div className="flex gap-[7px]">
          <button aria-label="Add remote host"><AddHostIcon /></button>
          <button aria-label="Add JMX connection"><AddJmxIcon /></button>
          <button aria-label="Add VM coredump"><AddDumpIcon /></button>
          <button aria-label="Add snapshot"><AddSnapshotIcon /></button>
        </div>
      </div>
      <div className="flex min-h-0 flex-1 px-[3px] pt-2 pb-[9px]">
        <Sidebar />
        <Editor />
      </div>
      <JMeter />

      {/* red marks drawn over both windows */}
      <div className="absolute top-[388px] left-[168px] h-[139px] w-[232px] rounded-md border-4 border-[#ff2012]" />
      <div className="absolute top-[874px] left-[170px] h-[81px] w-[225px] rounded-md border-4 border-[#ff2012]" />
      <div className="absolute top-[454px] left-[1246px] h-[42px] w-[116px] rounded-md border-4 border-[#ff2012]" />
      <p className="absolute top-[550px] left-[923px] font-['Noto_Sans_CJK_SC',sans-serif] text-[33px] leading-[48px] text-[#ff2012]">配置了最多9个</p>
    </div>
  );
}
